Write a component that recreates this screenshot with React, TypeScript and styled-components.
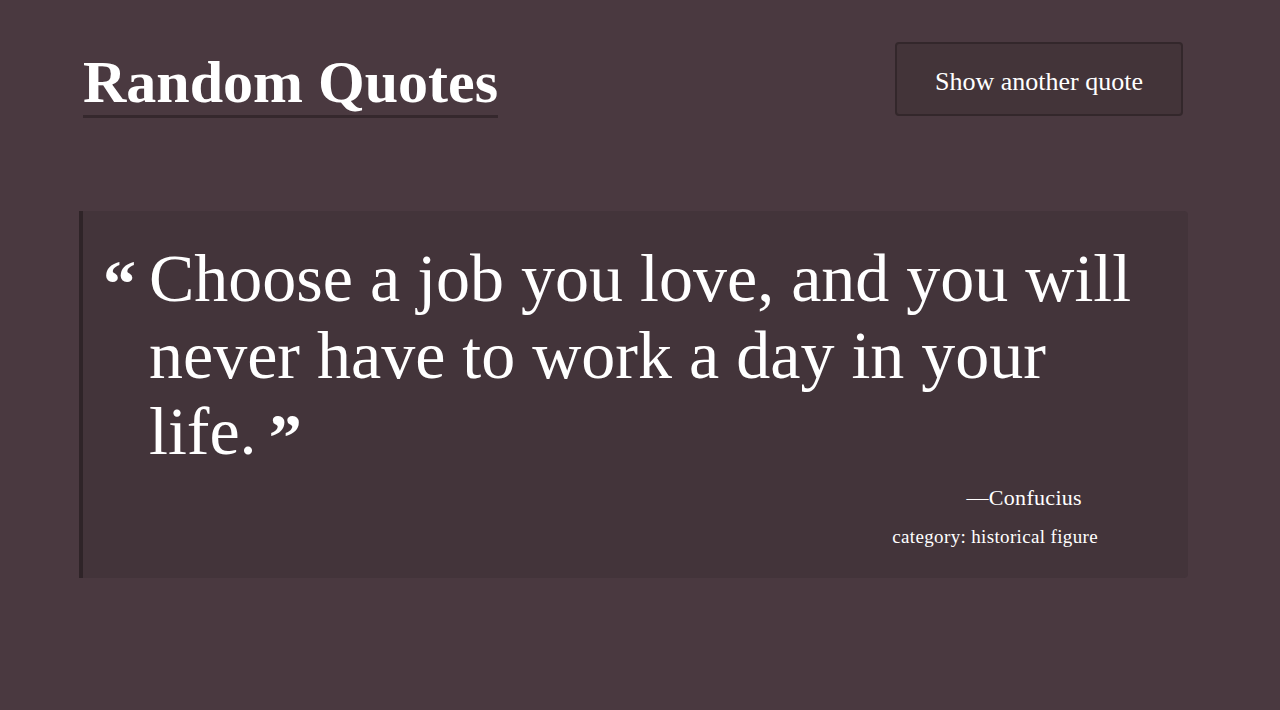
import React from "react";
import styled, { createGlobalStyle } from "styled-components";

const GlobalStyle = createGlobalStyle`
  html, body {
    margin: 0;
    padding: 0;
    background: #4a3940;
  }
  body {
    font-family: "Liberation Serif", "Times New Roman", serif;
    color: #ffffff;
    min-height: 710px;
  }
`;

const Page = styled.main`
  width: 1109px;
  padding: 42px 0 0 79px;
  box-sizing: content-box;
`;

const Header = styled.header`
  display: flex;
  justify-content: space-between;
  align-items: flex-start;
  padding: 0 5px 0 4px;
`;

const Title = styled.h1`
  margin: 7px 0 0;
  font-size: 60px;
  line-height: 66px;
  font-weight: 700;
  display: inline-block;
  border-bottom: 3px solid #35282d;
`;

const NewQuoteButton = styled.button`
  width: 288px;
  height: 74px;
  box-sizing: border-box;
  padding: 5px 0 0;
  background: #433439;
  border: 2px solid #33272b;
  border-radius: 4px;
  color: #ffffff;
  font-family: "Liberation Serif", "Times New Roman", serif;
  font-size: 26px;
  cursor: pointer;
`;

const Card = styled.figure`
  margin: 93px 0 0;
  background: #43343a;
  border-left: 4px solid #2f2428;
  border-radius: 0 4px 4px 0;
  padding: 29px 0 29px 20px;
`;

const QuoteRow = styled.blockquote`
  display: flex;
  margin: 0;
`;

const Mark = styled.span`
  font-family: "Liberation Serif", serif;
  font-weight: 700;
  font-size: 66px;
  line-height: 40px;
  height: 30px;
  overflow: visible;
  display: inline-block;
`;

const OpenMark = styled(Mark)`
  flex: 0 0 46px;
  margin-top: 24px;
`;

const QuoteText = styled.p`
  margin: 0;
  max-width: 1010px;
  font-size: 68px;
  line-height: 76.5px;
`;

const CloseMark = styled(Mark)`
  vertical-align: top;
  margin: 24px 0 0 12px;
`;

const Caption = styled.figcaption`
  display: flex;
  flex-direction: column;
  align-items: flex-end;
`;

const Author = styled.div<{ $right: number }>`
  margin-top: 14px;
  padding-right: ${(p) => p.$right}px;
  font-size: 22px;
  line-height: 28px;
  letter-spacing: 0.3px;
`;

const Category = styled.div<{ $right: number }>`
  margin-top: 13px;
  padding-right: ${(p) => p.$right}px;
  font-size: 19px;
  line-height: 24px;
  letter-spacing: 0.35px;
`;

export default function App() {
  return (
    <>
      <GlobalStyle />
      <Page>
        <Header>
          <Title>Random Quotes</Title>
          <NewQuoteButton>Show another quote</NewQuoteButton>
        </Header>
        <Card>
          <QuoteRow>
            <OpenMark>“</OpenMark>
            <QuoteText>
              Choose a job you love, and you will never have to work a day in your life.
              <CloseMark>”</CloseMark>
            </QuoteText>
          </QuoteRow>
          <Caption>
            <Author $right={106}>—Confucius</Author>
            <Category $right={90}>category: historical figure</Category>
          </Caption>
        </Card>
      </Page>
    </>
  );
}
